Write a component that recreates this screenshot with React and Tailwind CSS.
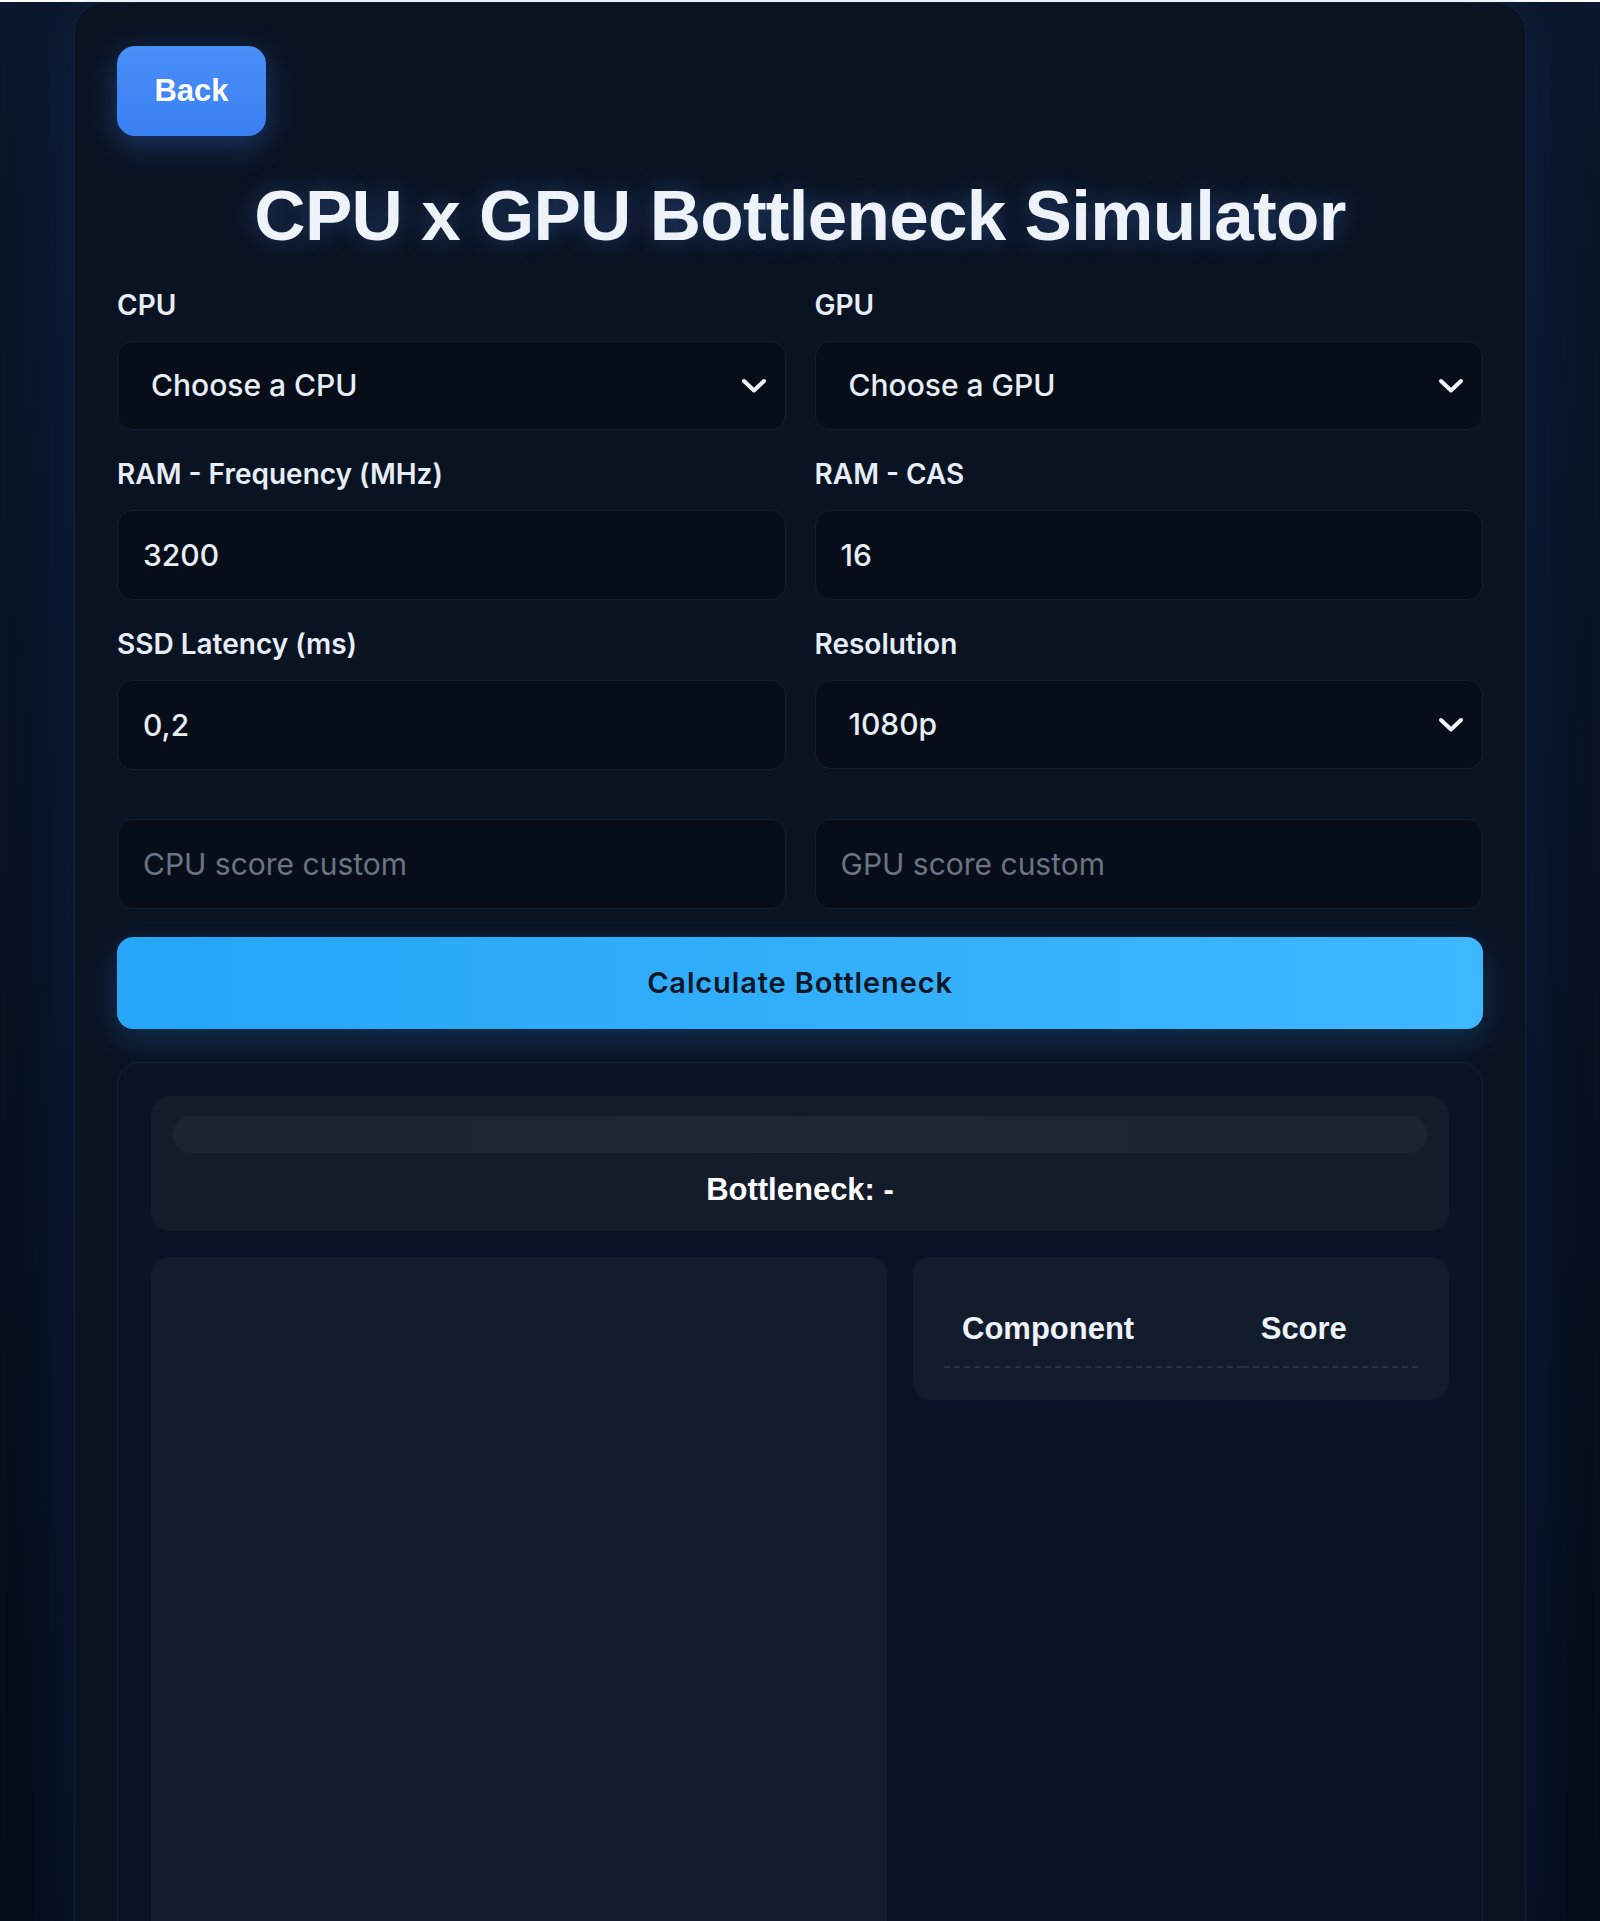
const FONT = { fontFamily: '"Liberation Sans", Arial, sans-serif' }
const INTER = { fontFamily: 'Inter, "Liberation Sans", sans-serif' }

function Chevron() {
  return (
    <svg width="30" height="18" viewBox="0 0 30 18" fill="none" aria-hidden="true">
      <path d="M5 4 L15 13.5 L25 4" stroke="#f1f5fb" strokeWidth="4" strokeLinecap="round" strokeLinejoin="round" />
    </svg>
  )
}

function Label({ children }) {
  return (
    <div className="mb-[20px] text-[28px] leading-[32px] font-semibold text-[#e6edf6]" style={INTER}>
      {children}
    </div>
  )
}

function SelectBox({ value }) {
  return (
    <div className="flex h-[89px] items-center justify-between rounded-[15px] border border-[#141e2e] bg-[#070e1a] pl-[33px] pr-[16px]">
      <span className="text-[30px] font-medium text-[#e8eef6]" style={INTER}>{value}</span>
      <Chevron />
    </div>
  )
}

function InputBox({ value, placeholder }) {
  return (
    <div className="flex h-[90px] items-center rounded-[15px] border border-[#141e2e] bg-[#070e1a] pl-[25px]" style={INTER}>
      {value ? (
        <span className="text-[30px] font-medium text-[#e8eef6]">{value}</span>
      ) : (
        <span className="text-[30px] text-[#6a7483]">{placeholder}</span>
      )}
    </div>
  )
}

export default function App() {
  return (
    <div className="min-h-screen bg-gradient-to-b from-[#0b172a] to-[#050c18]" style={FONT}>
      <div className="mx-auto mt-[2px] w-[1452px] rounded-t-[30px] border border-[#122036] bg-[#0a1322] px-[42px] pt-[43px] pb-[40px] shadow-[0_0_70px_rgba(20,90,200,0.18)]">
        <button
          type="button"
          className="flex h-[90px] w-[149px] items-center justify-center rounded-[18px] bg-gradient-to-b from-[#4a8ef7] to-[#3b80f3] text-[31px] font-bold text-white shadow-[0_8px_30px_rgba(59,130,246,0.35)]"
        >
          Back
        </button>

        <h1 className="mt-[37px] text-center text-[71px] leading-[85px] font-bold tracking-[-0.01em] text-[#eef3fa] [text-shadow:0_0_24px_rgba(90,150,255,0.35)]">
          CPU x GPU Bottleneck Simulator
        </h1>

        <div className="mt-[31px] grid grid-cols-2 gap-x-[29px] gap-y-[28px]">
          <div>
            <Label>CPU</Label>
            <SelectBox value="Choose a CPU" />
          </div>
          <div>
            <Label>GPU</Label>
            <SelectBox value="Choose a GPU" />
          </div>
          <div>
            <Label>RAM - Frequency (MHz)</Label>
            <InputBox value="3200" />
          </div>
          <div>
            <Label>RAM - CAS</Label>
            <InputBox value="16" />
          </div>
          <div>
            <Label>SSD Latency (ms)</Label>
            <InputBox value="0,2" />
          </div>
          <div>
            <Label>Resolution</Label>
            <SelectBox value="1080p" />
          </div>
        </div>

        <div className="mt-[49px] grid grid-cols-2 gap-x-[29px]">
          <InputBox placeholder="CPU score custom" />
          <InputBox placeholder="GPU score custom" />
        </div>

        <button
          type="button"
          className="mt-[28px] flex h-[92px] w-full items-center justify-center rounded-[16px] bg-gradient-to-r from-[#25a6f6] to-[#3db7ff] text-[29px] font-semibold tracking-[0.03em] text-[#0a1726] shadow-[0_10px_34px_rgba(40,160,255,0.22)]"
          style={INTER}
        >
          Calculate Bottleneck
        </button>

        <div className="mt-[33px] rounded-[22px] border border-[#14203a] bg-[#0a1426] p-[33px]">
          <div className="rounded-[18px] bg-[#141c2b] px-[22px] pt-[20px] pb-[23px]">
            <div className="h-[37px] w-full rounded-full bg-gradient-to-r from-[#1b2431] via-[#1e2835] to-[#1b2431]" />
            <div className="mt-[19px] text-center text-[31px] leading-[36px] font-bold text-white">Bottleneck: -</div>
          </div>

          <div className="mt-[26px] grid grid-cols-[736px_1fr] items-start gap-[26px]">
            <div className="h-[760px] rounded-[18px] bg-[#131c2c]" />
            <div className="rounded-[18px] bg-[#131c2c] px-[31px] pt-[35px] pb-[32px]">
              <table className="w-full border-collapse">
                <thead>
                  <tr className="border-b-2 border-dashed border-[#263142]">
                    <th className="px-[18px] py-[19px] text-left text-[31px] leading-[36px] font-bold text-[#eef3fa]">Component</th>
                    <th className="px-[18px] py-[19px] text-left text-[31px] leading-[36px] font-bold text-[#eef3fa]">Score</th>
                  </tr>
                </thead>
                <tbody />
              </table>
            </div>
          </div>
        </div>
      </div>
    </div>
  )
}
